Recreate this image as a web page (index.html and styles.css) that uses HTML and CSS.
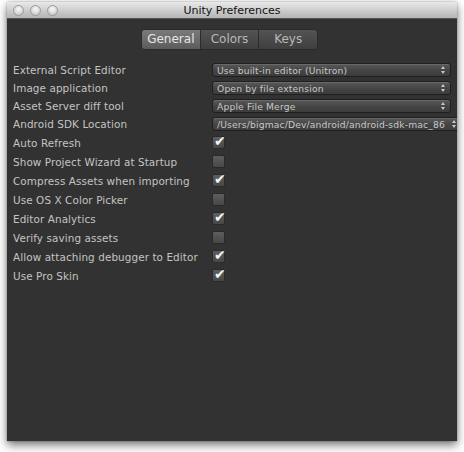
FILE: index.html
```html
<!DOCTYPE html>
<html>
<head>
<meta charset="utf-8">
<link rel="stylesheet" href="styles.css">
</head>
<body>
<div class="window">
  <div class="titlebar">
    <div class="lights"><span class="light"></span><span class="light"></span><span class="light"></span></div>
    <div class="title">Unity Preferences</div>
  </div>
  <div class="content">
    <div class="tabs">
      <div class="tab active">General</div>
      <div class="tab">Colors</div>
      <div class="tab">Keys</div>
    </div>
    <div class="rows">
      <div class="row"><span class="label">External Script Editor</span><div class="popup"><span class="ptext">Use built-in editor (Unitron)</span><span class="arrows"></span></div></div>
      <div class="row"><span class="label">Image application</span><div class="popup"><span class="ptext">Open by file extension</span><span class="arrows"></span></div></div>
      <div class="row"><span class="label">Asset Server diff tool</span><div class="popup"><span class="ptext">Apple File Merge</span><span class="arrows"></span></div></div>
      <div class="row"><span class="label">Android SDK Location</span><div class="popup wide"><span class="ptext">/Users/bigmac/Dev/android/android-sdk-mac_86</span><span class="arrows"></span></div></div>
      <div class="row crow"><span class="label">Auto Refresh</span><span class="check on"></span></div>
      <div class="row crow"><span class="label">Show Project Wizard at Startup</span><span class="check"></span></div>
      <div class="row crow"><span class="label">Compress Assets when importing</span><span class="check on"></span></div>
      <div class="row crow"><span class="label">Use OS X Color Picker</span><span class="check"></span></div>
      <div class="row crow"><span class="label">Editor Analytics</span><span class="check on"></span></div>
      <div class="row crow"><span class="label">Verify saving assets</span><span class="check"></span></div>
      <div class="row crow"><span class="label">Allow attaching debugger to Editor</span><span class="check on"></span></div>
      <div class="row crow"><span class="label">Use Pro Skin</span><span class="check on"></span></div>
    </div>
  </div>
</div>
</body>
</html>
```
FILE: styles.css
```css
html, body { margin: 0; padding: 0; background: #fff; }
body { width: 464px; height: 452px; overflow: hidden; font-family: "DejaVu Sans", sans-serif; }
.window {
  margin: 2px 7px 0 7px;
  width: 450px;
  height: 439px;
  background: #323232;
  box-shadow: 0 4px 9px rgba(0,0,0,0.55), 0 0 2px rgba(0,0,0,0.3);
  display: flex;
  flex-direction: column;
  overflow: hidden;
}
.titlebar {
  height: 16px;
  background: linear-gradient(#e9e9e9, #c9c9c9 60%, #b4b4b4);
  border-bottom: 1px solid #555;
  display: flex;
  align-items: center;
  position: relative;
}
.lights { display: flex; gap: 6px; padding-left: 6px; }
.light {
  width: 11px; height: 11px; border-radius: 50%;
  background: radial-gradient(circle at 50% 35%, #fafafa, #d6d6d6 60%, #bcbcbc);
  border: 1px solid #9a9a9a;
  box-sizing: border-box;
}
.title {
  position: absolute; left: 0; right: 0; top: 0; bottom: 0;
  text-align: center; font-size: 11px; line-height: 17px; color: #111;
  font-family: "DejaVu Sans", sans-serif;
}
.content { padding: 10px 0 0 6px; }
.tabs {
  display: flex; margin-left: 128px; width: 177px; height: 21px;
  border-radius: 4px; overflow: hidden;
  border: 1px solid #2a2a2a;
  box-sizing: border-box;
}
.tab {
  flex: 1; text-align: center; font-size: 12px; line-height: 19px;
  color: #b8b8b8;
  background: linear-gradient(#535353, #3f3f3f);
  border-left: 1px solid #2c2c2c;
}
.tab:first-child { border-left: none; }
.tab.active { background: linear-gradient(#7a7a7a, #5c5c5c); color: #e6e6e6; }
.rows { margin-top: 11px; display: flex; flex-direction: column; }
.row { display: flex; align-items: center; height: 18px; }
.crow { height: 19px; }
.label {
  width: 199px; flex-shrink: 0; font-size: 10.4px; color: #c4c4c4; letter-spacing: 0.1px; white-space: nowrap;
}
.popup {
  width: 239px; height: 14px; box-sizing: border-box;
  border: 1px solid #1f1f1f; border-radius: 3px;
  background: linear-gradient(#595959, #444 55%, #3c3c3c);
  box-shadow: inset 0 1px 0 rgba(255,255,255,0.1);
  display: flex; align-items: center; justify-content: space-between;
  padding: 0 4px 0 4px;
  flex-shrink: 0;
}
.popup.wide { width: 250px; }
.ptext { font-size: 9.2px; color: #c8c8c8; white-space: nowrap; letter-spacing: 0.15px; }
.arrows {
  width: 5px; height: 8px; position: relative; flex-shrink: 0;
}
.arrows::before, .arrows::after {
  content: ""; position: absolute; left: 0; width: 0; height: 0;
  border-left: 2.5px solid transparent; border-right: 2.5px solid transparent;
}
.arrows::before { top: 0; border-bottom: 3px solid #c8c8c8; }
.arrows::after { bottom: 0; border-top: 3px solid #c8c8c8; }
.check {
  width: 13px; height: 13px; box-sizing: border-box; border-radius: 2px;
  border: 1px solid #2a2a2a;
  background: linear-gradient(#5e5e5e, #474747);
  position: relative;
}
.check.on::after {
  content: "\2714"; position: absolute; left: 1px; top: -4px;
  font-size: 14px; color: #f4f4f4; line-height: 16px;
}
```
